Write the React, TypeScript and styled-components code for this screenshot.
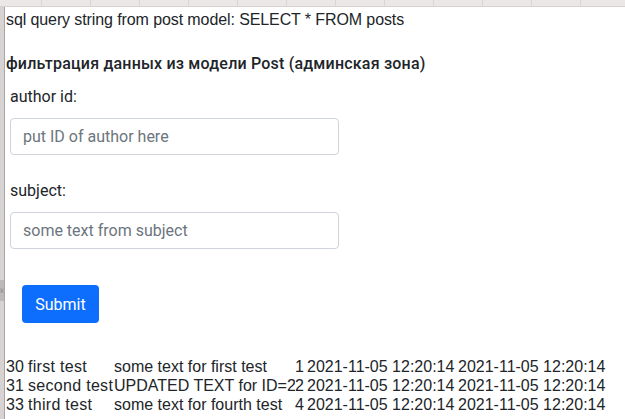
import React from "react";
import styled, { createGlobalStyle } from "styled-components";

const Global = createGlobalStyle`
  html, body { margin: 0; padding: 0; background: #ffffff; }
  body { font-family: "Liberation Sans", Arial, sans-serif; color: #212529; }
  #root { width: 625px; height: 419px; overflow: hidden; }
`;

const Page = styled.div`
  display: flex;
  flex-direction: column;
  width: 625px;
  height: 419px;
`;

const TopStrip = styled.div`
  display: flex;
  height: 6px;
  background: #ebe7e7;
  border-bottom: 1px solid #d6d2d2;
  flex-shrink: 0;
`;

const StripCell = styled.div<{ $w: number }>`
  width: ${(p) => p.$w}px;
  flex-shrink: 0;
  border-right: 1px solid #d9d5d5;
  box-sizing: border-box;
`;

const Body = styled.div`
  display: flex;
  flex: 1;
  min-height: 0;
`;

const LeftEdge = styled.div`
  width: 4px;
  flex-shrink: 0;
  background: #d8d3d3;
  border-right: 1px solid #aaa5a5;
  display: flex;
  flex-direction: column;
`;

const EdgeTab = styled.div`
  margin-top: 273px;
  height: 21px;
  background: #bdb8b8;
  display: flex;
  justify-content: center;
  align-items: center;
  font-size: 7px;
  color: #8c8888;
  line-height: 1;
`;

const Content = styled.div`
  flex: 1;
  padding-left: 1px;
  display: flex;
  flex-direction: column;
  align-items: flex-start;
`;

const QueryLine = styled.div`
  font-family: "Liberation Sans", Arial, sans-serif;
  font-size: 16px;
  line-height: 23px;
  margin-top: 1px;
  letter-spacing: -0.1px;
`;

const Heading = styled.h5`
  margin: 21px 0 0 0;
  font-family: Roboto, "Liberation Sans", sans-serif;
  font-weight: 500;
  font-size: 16px;
  line-height: 24px;
  letter-spacing: 0.2px;
`;

const Form = styled.form`
  display: flex;
  flex-direction: column;
  padding-left: 4px;
  margin-top: 9px;
`;

const Field = styled.div<{ $gap: number }>`
  display: flex;
  flex-direction: column;
  margin-top: ${(p) => p.$gap}px;
`;

const Label = styled.label`
  font-family: Roboto, "Liberation Sans", sans-serif;
  font-size: 16px;
  line-height: 24px;
  margin-bottom: 9px;
`;

const Input = styled.input`
  width: 329px;
  height: 37px;
  box-sizing: border-box;
  padding: 6px 12px;
  border: 1px solid #ced4da;
  border-radius: 4px;
  font-family: Roboto, "Liberation Sans", sans-serif;
  font-size: 16px;
  color: #212529;
  background: #fff;
  outline: none;
  &::placeholder { color: #6c757d; }
`;

const ButtonRow = styled.div`
  padding-left: 12px;
  margin-top: 36px;
`;

const SubmitButton = styled.button`
  width: 77px;
  height: 38px;
  border: none;
  border-radius: 4px;
  background: #0d6efd;
  color: #fff;
  font-family: Roboto, "Liberation Sans", sans-serif;
  font-size: 16px;
  padding: 0;
  cursor: pointer;
`;

const Table = styled.table`
  margin-top: 34px;
  width: 603px;
  border-collapse: collapse;
  table-layout: fixed;
  font-family: "Liberation Sans", Arial, sans-serif;
  font-size: 16px;
`;

const Col = styled.col<{ $w: number }>`
  width: ${(p) => p.$w}px;
`;

const Cell = styled.td<{ $spacing: number }>`
  padding: 0;
  line-height: 19px;
  white-space: nowrap;
  overflow: hidden;
  vertical-align: top;
  letter-spacing: ${(p) => p.$spacing}px;
`;

const rows = [
  ["30", "first test", "some text for first test", "1", "2021-11-05 12:20:14", "2021-11-05 12:20:14"],
  ["31", "second test", "UPDATED TEXT for ID=2", "2", "2021-11-05 12:20:14", "2021-11-05 12:20:14"],
  ["33", "third test", "some text for fourth test", "4", "2021-11-05 12:20:14", "2021-11-05 12:20:14"],
];

const colWidths = [22, 86, 181, 12, 151, 151];
const colSpacing = [0, 0.3, 0, 0, 0, 0];

const stripWidths = [42, 49, 49, 49, 49, 49, 49, 49, 49, 49, 49, 49, 49, 49];

export default function App() {
  return (
    <Page>
      <Global />
      <TopStrip>
        {stripWidths.map((w, i) => (
          <StripCell key={i} $w={w} />
        ))}
      </TopStrip>
      <Body>
        <LeftEdge>
          <EdgeTab>k</EdgeTab>
        </LeftEdge>
        <Content>
          <QueryLine>sql query string from post model: SELECT * FROM posts</QueryLine>
          <Heading>фильтрация данных из модели Post (админская зона)</Heading>
          <Form onSubmit={(e) => e.preventDefault()}>
            <Field $gap={0}>
              <Label htmlFor="author">author id:</Label>
              <Input id="author" placeholder="put ID of author here" />
            </Field>
            <Field $gap={24}>
              <Label htmlFor="subject">subject:</Label>
              <Input id="subject" placeholder="some text from subject" />
            </Field>
            <ButtonRow>
              <SubmitButton type="submit">Submit</SubmitButton>
            </ButtonRow>
          </Form>
          <Table>
            <colgroup>
              {colWidths.map((w, i) => (
                <Col key={i} $w={w} />
              ))}
            </colgroup>
            <tbody>
              {rows.map((r) => (
                <tr key={r[0]}>
                  {r.map((c, i) => (
                    <Cell key={i} $spacing={colSpacing[i]}>
                      {c}
                    </Cell>
                  ))}
                </tr>
              ))}
            </tbody>
          </Table>
        </Content>
      </Body>
    </Page>
  );
}
